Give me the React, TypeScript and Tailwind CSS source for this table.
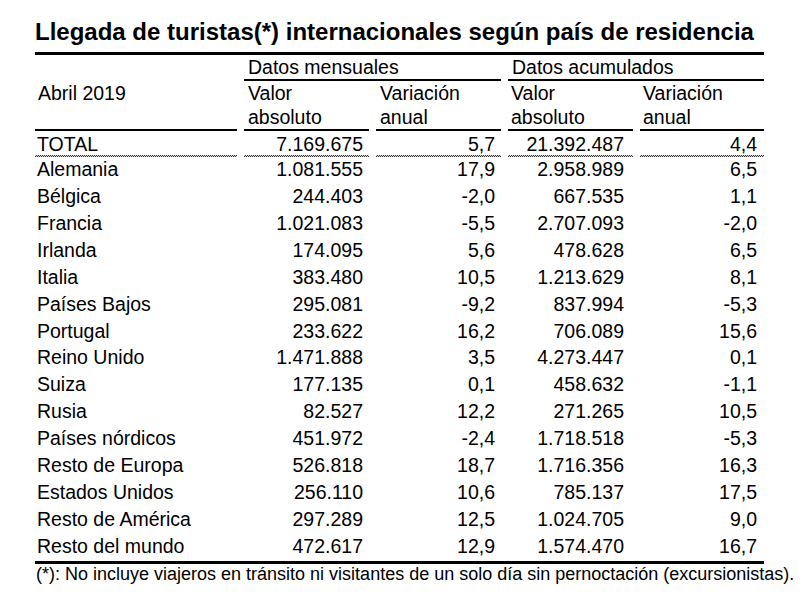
import React from "react";

type Row = [string, string, string, string, string];

const rows: Row[] = [
  ["Alemania", "1.081.555", "17,9", "2.958.989", "6,5"],
  ["Bélgica", "244.403", "-2,0", "667.535", "1,1"],
  ["Francia", "1.021.083", "-5,5", "2.707.093", "-2,0"],
  ["Irlanda", "174.095", "5,6", "478.628", "6,5"],
  ["Italia", "383.480", "10,5", "1.213.629", "8,1"],
  ["Países Bajos", "295.081", "-9,2", "837.994", "-5,3"],
  ["Portugal", "233.622", "16,2", "706.089", "15,6"],
  ["Reino Unido", "1.471.888", "3,5", "4.273.447", "0,1"],
  ["Suiza", "177.135", "0,1", "458.632", "-1,1"],
  ["Rusia", "82.527", "12,2", "271.265", "10,5"],
  ["Países nórdicos", "451.972", "-2,4", "1.718.518", "-5,3"],
  ["Resto de Europa", "526.818", "18,7", "1.716.356", "16,3"],
  ["Estados Unidos", "256.110", "10,6", "785.137", "17,5"],
  ["Resto de América", "297.289", "12,5", "1.024.705", "9,0"],
  ["Resto del mundo", "472.617", "12,9", "1.574.470", "16,7"],
];

const dotted =
  "h-[2px] bg-[conic-gradient(#333_25%,#d8d8d8_0_50%,#333_0_75%,#d8d8d8_0)] bg-[length:2px_2px]";

const padCls = ["pl-[2px] text-left", "pr-[6px] text-right", "pr-[6px] text-right", "pr-[9px] text-right", "pr-[7px] text-right"];

export default function App() {
  const total: Row = ["TOTAL", "7.169.675", "5,7", "21.392.487", "4,4"];
  return (
    <div className="w-[810px] h-[603px] bg-white text-black font-['Liberation_Sans',Arial,sans-serif] overflow-hidden">
      <div className="ml-[35px] w-[729px]">
        <h1 className="pt-[17px] pb-[5px] border-b-[3px] border-black text-[24px] leading-[30px] font-bold whitespace-nowrap">
          Llegada de turistas(*) internacionales según país de residencia
        </h1>
        <div className="grid grid-cols-[202px_125px_125px_125px_124px] gap-x-[7px] text-[19.5px] border-b-[3px] border-black whitespace-nowrap">
          {/* header row 1 */}
          <div className="h-[26px]" />
          <div className="col-span-2 h-[26px] pt-[1px] leading-[23px] pl-[4px] border-b-2 border-black">
            Datos mensuales
          </div>
          <div className="col-span-2 h-[26px] pt-[1px] leading-[23px] pl-[4px] border-b-2 border-black">
            Datos acumulados
          </div>

          {/* header row 2 */}
          <div className="h-[50px] leading-[24px] pl-[3px] border-b-2 border-black">Abril 2019</div>
          <div className="h-[50px] leading-[24px] pl-[4px] border-b-2 border-black">
            Valor
            <br />
            absoluto
          </div>
          <div className="h-[50px] leading-[24px] pl-[4px] border-b-2 border-black">
            Variación
            <br />
            anual
          </div>
          <div className="h-[50px] leading-[24px] pl-[3px] border-b-2 border-black">
            Valor
            <br />
            absoluto
          </div>
          <div className="h-[50px] leading-[24px] pl-[3px] border-b-2 border-black">
            Variación
            <br />
            anual
          </div>

          {/* total row */}
          {total.map((v, i) => (
            <div key={"t" + i} className="h-[26px] flex flex-col">
              <div className={"flex-1 pt-[2px] leading-[22px] " + padCls[i]}>{v}</div>
              <div className={dotted} />
            </div>
          ))}

          {/* data rows */}
          {rows.map((r, ri) =>
            r.map((v, i) => (
              <div key={ri + "-" + i} className={"h-[26.93px] leading-[25px] " + padCls[i]}>
                {v}
              </div>
            ))
          )}
        </div>
        <p className="pl-[1px] text-[18px] leading-[20px] whitespace-nowrap">
          (*): No incluye viajeros en tránsito ni visitantes de un solo día sin pernoctación (excursionistas).
        </p>
      </div>
    </div>
  );
}
